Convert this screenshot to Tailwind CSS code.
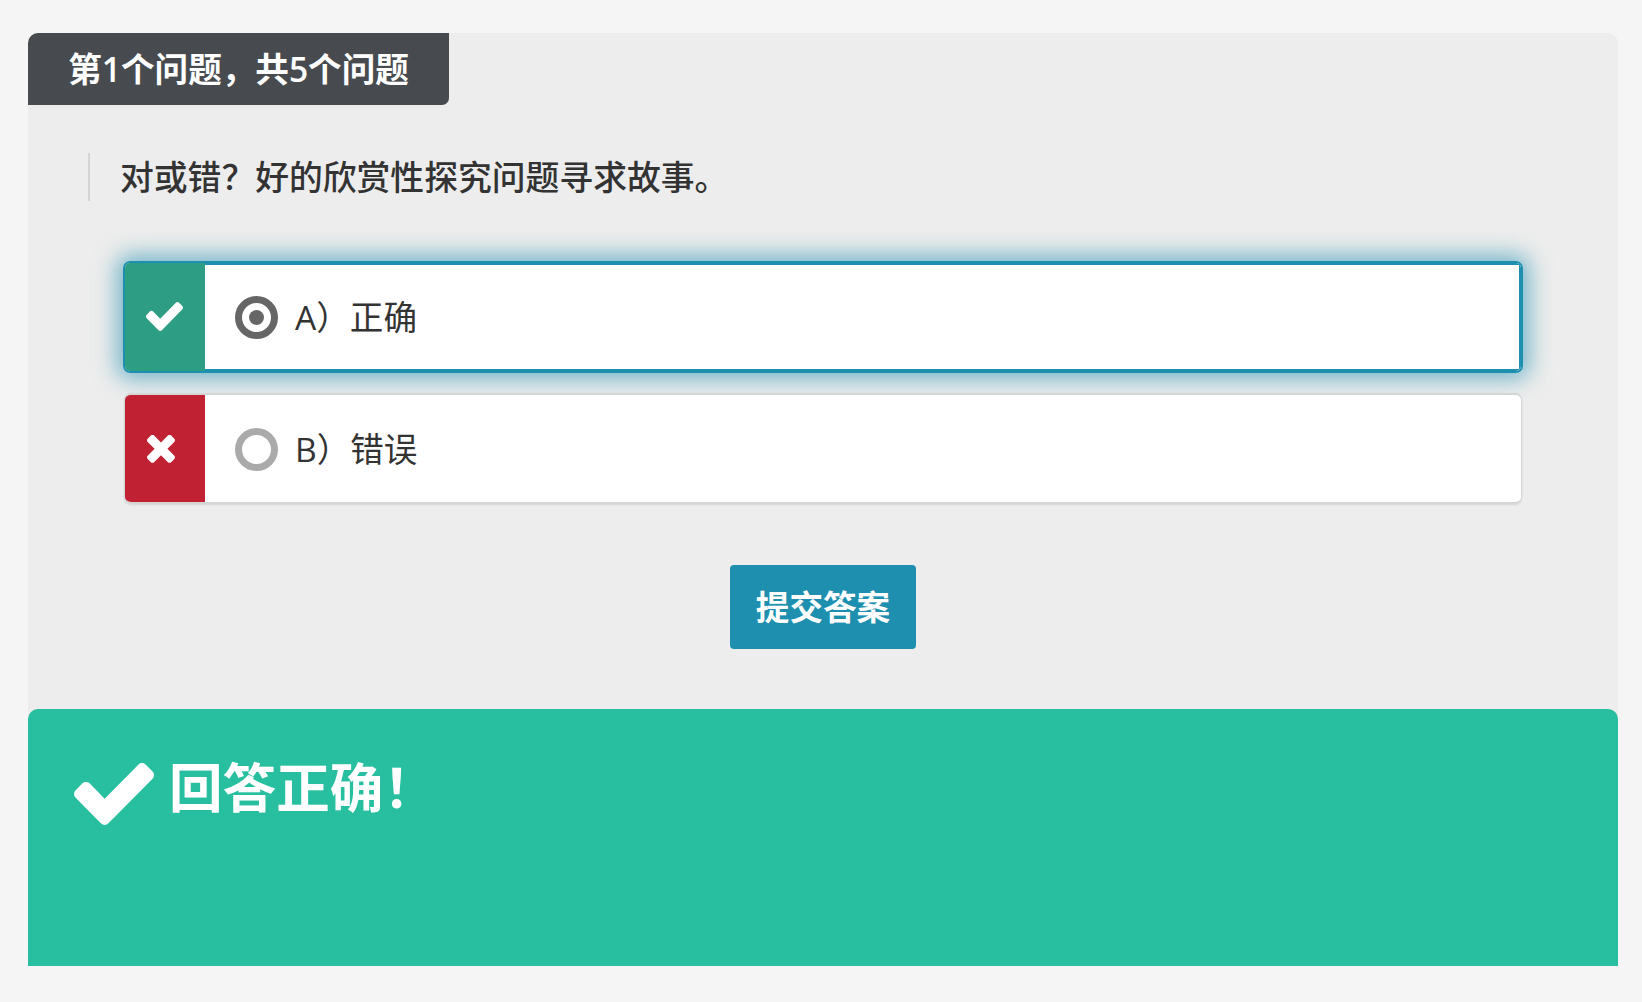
<!DOCTYPE html>
<html lang="zh-CN">
<head>
  <meta charset="UTF-8">
  <title>第1个问题，共5个问题</title>
  <script src="https://cdn.jsdelivr.net/npm/@tailwindcss/browser@4"></script>
</head>
<body class="bg-[#f5f5f5] font-['Open_Sans','Noto_Sans_CJK_SC',sans-serif] text-[#333]">
  <div class="h-[1002px] pt-[33px] pl-[28px] pr-[24px]">
    <!-- Question panel -->
    <div class="bg-[#ededed] rounded-t-[10px]">
      <div class="w-[421px] h-[72px] flex items-center justify-center bg-[#474b4f] rounded-tl-[10px] rounded-br-[7px] text-white text-[33.6px] font-bold">第<span class="font-semibold">1</span>个问题，共<span class="font-semibold">5</span>个问题</div>

      <div class="mt-[48px] ml-[60px] h-[48px] pl-[30px] border-l-2 border-[#d4d4d4] flex items-center text-[33.8px] font-medium">对或错？好的欣赏性探究问题寻求故事。</div>

      <!-- Options -->
      <div class="mt-[60px] mx-[95px] flex h-[112px] border-2 border-[#1f8fb0] rounded-[7px] shadow-[0_0_22px_6px_rgba(31,143,176,0.6)] overflow-hidden">
        <div class="w-[80px] flex items-center justify-center bg-[#2d9e84]">
          <svg class="w-[37px] h-[29px] -mt-[2px] -ml-[1px]" viewBox="121 334 1550 1188" preserveAspectRatio="none" fill="#fff"><path d="M1671 566q0 40-28 68l-724 724-136 136q-28 28-68 28t-68-28l-136-136-362-362q-28-28-28-68t28-68l136-136q28-28 68-28t68 28l294 295 656-657q28-28 68-28t68 28l136 136q28 28 28 68z"/></svg>
        </div>
        <div class="flex-1 flex items-center pl-[30px] bg-white shadow-[inset_-2px_-2px_0_0_#1f8fb0,inset_0_2px_0_0_#1f8fb0]">
          <span class="size-[43px] rounded-full border-[7px] border-[#666] flex items-center justify-center">
            <span class="size-[15px] rounded-full bg-[#666]"></span>
          </span>
          <span class="ml-[17px] text-[33.6px]">A）正确</span>
        </div>
      </div>

      <div class="mt-[20px] mx-[96px] flex h-[111px] border-x border-y-2 border-[#d5d5d5] rounded-[7px] shadow-[0_1px_2px_rgba(0,0,0,0.1)] overflow-hidden">
        <div class="w-[80px] flex items-center justify-center bg-[#c12233]">
          <svg class="w-[28px] h-[28px] -ml-[8px] mt-[1px]" viewBox="110 266 1188 1188" fill="#fff"><path d="M1298 1214q0 40-28 68l-136 136q-28 28-68 28t-68-28l-294-294-294 294q-28 28-68 28t-68-28l-136-136q-28-28-28-68t28-68l294-294-294-294q-28-28-28-68t28-68l136-136q28-28 68-28t68 28l294 294 294-294q28-28 68-28t68 28l136 136q28 28 28 68t-28 68l-294 294 294 294q28 28 28 68z"/></svg>
        </div>
        <div class="flex-1 flex items-center pl-[30px] pt-[2px] bg-white">
          <span class="size-[43px] rounded-full border-[7px] border-[#aaa]"></span>
          <span class="ml-[17px] text-[33.6px]">B）错误</span>
        </div>
      </div>

      <div class="mt-[61px] flex justify-center">
        <button class="w-[186px] h-[84px] bg-[#1f8fb0] rounded-[4px] text-white text-[33.6px] font-bold">提交答案</button>
      </div>

      <!-- Result -->
      <div class="mt-[60px] h-[257px] bg-[#27bf9f] rounded-t-[10px] pt-[54px] pl-[46px] flex items-start text-white">
        <svg class="w-[80px] h-[62px] shrink-0" viewBox="121 334 1550 1188" preserveAspectRatio="none" fill="#fff"><path d="M1671 566q0 40-28 68l-724 724-136 136q-28 28-68 28t-68-28l-136-136-362-362q-28-28-28-68t28-68l136-136q28-28 68-28t68 28l294 295 656-657q28-28 68-28t68 28l136 136q28 28 28 68z"/></svg>
        <div class="ml-[15px] -mt-[14px] text-[53.6px] leading-[78px] font-bold">回答正确！</div>
      </div>
    </div>
  </div>
</body>
</html>
